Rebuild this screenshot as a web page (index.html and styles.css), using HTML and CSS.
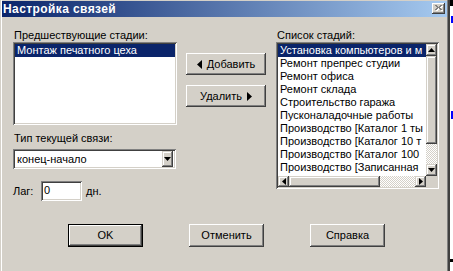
FILE: index.html
```html
<!DOCTYPE html>
<html>
<head>
<meta charset="utf-8">
<link rel="stylesheet" href="styles.css">
</head>
<body>
<div class="screen">
  <div class="window">
    <div class="titlebar">
      <span class="title">Настройка связей</span>
      <span class="close">
        <svg width="8" height="7" viewBox="0 0 8 7">
          <path d="M1 1h2v1h1v1h1V2h1V1h2v1H7v1H6v1h1v1h1v1H6V5H5V4H4v1H3v1H1V5h1V4h1V3H2V2H1z" fill="#fff"/>
          <path d="M0 0h2v1h1v1h1V1h1V0h2v1H6v1H5v1h1v1h1v1H5V4H4V3H3v1H2v1H0V4h1V3h1V2H1V1H0z" fill="#808080"/>
        </svg>
      </span>
    </div>
    <div class="body">
      <div class="top">
        <div class="col-left">
          <div class="label">Предшествующие стадии:</div>
          <div class="sunken listbox lb-left">
            <div class="item sel">Монтаж печатного цеха</div>
          </div>
          <div class="label label-type">Тип текущей связи:</div>
          <div class="sunken combo">
            <span class="combo-text">конец-начало</span>
            <span class="sbtn dropbtn">
              <svg width="7" height="4" viewBox="0 0 7 4"><path d="M0 0h7L3.5 4z" fill="#000"/></svg>
            </span>
          </div>
          <div class="lag">
            <span class="lag-label">Лаг:</span>
            <span class="sunken edit">0</span>
            <span class="lag-unit">дн.</span>
          </div>
        </div>
        <div class="col-mid">
          <div class="btn move-btn">
            <svg width="5" height="9" viewBox="0 0 5 9"><path d="M5 0v9L0 4.5z" fill="#000"/></svg>
            <span>Добавить</span>
          </div>
          <div class="btn move-btn">
            <span>Удалить</span>
            <svg width="5" height="9" viewBox="0 0 5 9"><path d="M0 0v9l5-4.5z" fill="#000"/></svg>
          </div>
        </div>
        <div class="col-right">
          <div class="label label-right">Список стадий:</div>
          <div class="sunken listbox lb-right">
            <div class="lb-grid">
              <div class="items">
                <div class="item sel">Установка компьютеров и м</div>
                <div class="item">Ремонт препрес студии</div>
                <div class="item">Ремонт офиса</div>
                <div class="item">Ремонт склада</div>
                <div class="item">Строительство гаража</div>
                <div class="item">Пусконаладочные работы</div>
                <div class="item">Производство [Каталог 1 ты</div>
                <div class="item">Производство [Каталог 10 т</div>
                <div class="item">Производство [Каталог 100</div>
                <div class="item">Производство [Записанная</div>
              </div>
              <div class="vscroll">
                <span class="sbtn vbtn">
                  <svg width="7" height="4" viewBox="0 0 7 4"><path d="M0 4h7L3.5 0z" fill="#000"/></svg>
                </span>
                <span class="thumb vthumb"></span>
                <span class="track vtrack"></span>
                <span class="sbtn vbtn">
                  <svg width="7" height="4" viewBox="0 0 7 4"><path d="M0 0h7L3.5 4z" fill="#000"/></svg>
                </span>
              </div>
              <div class="hscroll">
                <span class="sbtn hbtn">
                  <svg width="4" height="7" viewBox="0 0 4 7"><path d="M4 0v7L0 3.5z" fill="#000"/></svg>
                </span>
                <span class="thumb hthumb"></span>
                <span class="track htrack"></span>
                <span class="sbtn hbtn">
                  <svg width="4" height="7" viewBox="0 0 4 7"><path d="M0 0v7l4-3.5z" fill="#000"/></svg>
                </span>
              </div>
              <div class="corner"></div>
            </div>
          </div>
        </div>
      </div>
      <div class="bottom">
        <div class="btn dlg-btn default">OK</div>
        <div class="btn dlg-btn">Отменить</div>
        <div class="btn dlg-btn">Справка</div>
      </div>
    </div>
  </div>
  <div class="strip">
    <span class="mark m-black"></span>
    <span class="gap g1"></span>
    <span class="mark m-blue"></span>
    <span class="gap g2"></span>
    <span class="mark m-blue2"></span>
    <span class="gap g3"></span>
    <span class="mark m-tick"></span>
  </div>
</div>
</body>
</html>
```

FILE: styles.css
```css
* { box-sizing: border-box; }
html, body { margin: 0; padding: 0; background: #fff; }
body {
  font-family: "Liberation Sans", Arial, sans-serif;
  font-size: 11px;
  line-height: 13px;
  color: #000;
  -webkit-font-smoothing: none;
}
.screen {
  display: flex;
  width: 453px;
  height: 271px;
  overflow: hidden;
}
.window {
  width: 449px;
  height: 271px;
  flex: none;
  background: #d4d0c8;
  display: flex;
  flex-direction: column;
  padding: 1px 2px 0 2px;
  box-shadow: inset 1px 0 #d4d0c8, inset 2px 0 #fff, inset -1px 0 #404040, inset -2px 0 #808080;
}
.titlebar {
  height: 16px;
  flex: none;
  background: linear-gradient(to right, #0a246a, #a6caf0);
  display: flex;
  align-items: flex-start;
  justify-content: space-between;
  padding: 0 2px 0 1px;
}
.title {
  color: #fff;
  font-family: "Liberation Sans", Arial, sans-serif;
  font-weight: bold;
  font-size: 12px;
  line-height: 16px;
  letter-spacing: 0.4px;
  white-space: nowrap;
}
.close {
  width: 13px;
  height: 11px;
  margin-top: 2px;
  background: #d4d0c8;
  box-shadow: inset -1px -1px #404040, inset 1px 1px #fff, inset -2px -2px #808080;
  display: flex;
  align-items: center;
  justify-content: center;
}
.close svg { display: block; }

.body {
  flex: 1;
  display: flex;
  flex-direction: column;
  padding: 12px 0 0 11px;
}
.top { display: flex; align-items: flex-start; }

.label { height: 13px; white-space: nowrap; padding-left: 1px; }

.sunken {
  background: #fff;
  box-shadow: inset 1px 1px #808080, inset -1px -1px #fff, inset 2px 2px #404040, inset -2px -2px #d4d0c8;
  padding: 2px;
}

.col-left { width: 164px; display: flex; flex-direction: column; }
.lb-left { height: 83px; }
.item {
  height: 13px;
  line-height: 13px;
  padding-left: 2px;
  white-space: nowrap;
  overflow: hidden;
}
.item.sel { background: #0a246a; color: #fff; }

.label-type { margin-top: 7px; }
.combo {
  margin-top: 4px;
  width: 163px;
  height: 20px;
  display: flex;
  align-items: center;
  justify-content: space-between;
}
.combo-text { padding-left: 2px; line-height: 13px; }

.sbtn {
  background: #d4d0c8;
  box-shadow: inset -1px -1px #404040, inset 1px 1px #d4d0c8, inset -2px -2px #808080, inset 2px 2px #fff;
  display: flex;
  align-items: center;
  justify-content: center;
  flex: none;
}
.sbtn svg { display: block; }
.dropbtn { width: 11px; height: 16px; margin-right: 1px; }

.lag {
  margin-top: 12px;
  display: flex;
  align-items: center;
}
.lag-label { width: 28px; }
.edit {
  width: 41px;
  height: 20px;
  padding: 3px 3px;
  line-height: 13px;
}
.lag-unit { margin-left: 4px; }

.col-mid {
  width: 80px;
  margin-left: 9px;
  padding-top: 24px;
  display: flex;
  flex-direction: column;
  gap: 10px;
}
.btn {
  background: #d4d0c8;
  box-shadow: inset -1px -1px #404040, inset 1px 1px #fff, inset -2px -2px #808080, inset 2px 2px #d4d0c8;
  display: flex;
  align-items: center;
  justify-content: center;
  white-space: nowrap;
}
.move-btn { height: 22px; gap: 5px; }
.move-btn svg { display: block; }

.col-right { width: 163px; margin-left: 10px; display: flex; flex-direction: column; }
.label-right { padding-left: 1px; }
.lb-right { height: 147px; }
.lb-grid {
  display: grid;
  grid-template-columns: 148px 11px;
  grid-template-rows: 132px 11px;
  width: 159px;
  height: 143px;
}
.items { overflow: hidden; }
.lb-right .item { padding-left: 2px; }
.vscroll { display: flex; flex-direction: column; }
.vbtn { height: 12px; }
.thumb {
  background: #d4d0c8;
  box-shadow: inset -1px -1px #404040, inset 1px 1px #d4d0c8, inset -2px -2px #808080, inset 2px 2px #fff;
  flex: none;
}
.vthumb { height: 88px; }
.track {
  flex: 1;
  background: repeating-conic-gradient(#fff 0 25%, #d4d0c8 0 50%) 0 0 / 2px 2px;
}
.hscroll { display: flex; }
.hbtn { width: 11px; }
.hthumb { width: 91px; }
.corner { background: #d4d0c8; }

.bottom {
  margin-top: 23px;
  padding-left: 55px;
  display: flex;
  gap: 46px;
}
.dlg-btn { width: 75px; height: 23px; }
.dlg-btn.default {
  border: 1px solid #000;
}

.strip {
  flex: none;
  width: 4px;
  height: 271px;
  display: flex;
  flex-direction: column;
  border-left: 1px solid #404040;
}
.mark { display: block; flex: none; }
.gap { display: block; flex: none; }
.m-black { height: 6px; background: #000; }
.g1 { height: 10px; }
.m-blue { height: 7px; background: #0000ff; margin-left: 1px; }
.g2 { height: 88px; }
.m-blue2 { height: 8px; background: #0000ff; margin-left: 1px; }
.g3 { height: 140px; }
.m-tick { height: 3px; background: #000; }
```
